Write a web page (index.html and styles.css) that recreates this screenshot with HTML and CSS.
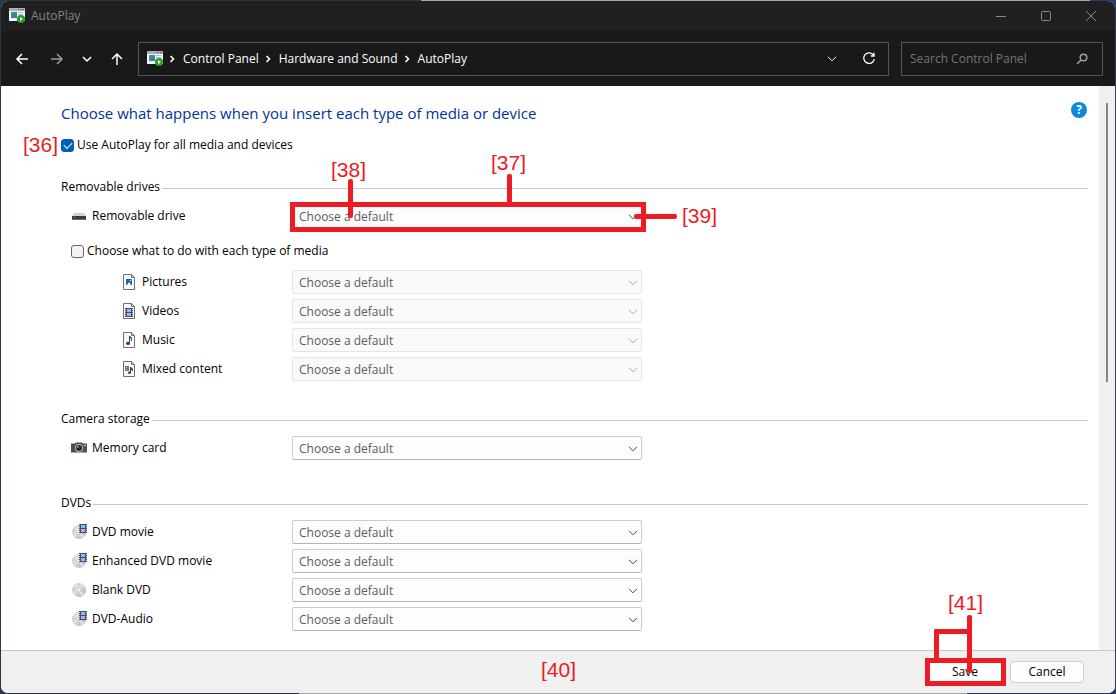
FILE: index.html
```html
<!DOCTYPE html>
<html lang="en">
<head>
<meta charset="utf-8">
<meta name="viewport" content="width=device-width, initial-scale=1">
<title>AutoPlay</title>
<link rel="stylesheet" href="styles.css">
</head>
<body>
<svg class="defs" aria-hidden="true">
  <defs>
    <linearGradient id="screen" x1="0" y1="0" x2="1" y2="1"><stop offset="0" stop-color="#4a9a8a"/><stop offset="1" stop-color="#3d6fb0"/></linearGradient>
    <linearGradient id="disc-fill" x1="0" y1="0" x2="1" y2="1"><stop offset="0" stop-color="#b8baba"/><stop offset=".45" stop-color="#dfe1e1"/><stop offset="1" stop-color="#9da0a0"/></linearGradient>
    <symbol id="autoplay" viewBox="0 0 16 16">
      <path fill="#f4f6f8" d="M0 0h16v13H0z"/><path fill="#a9b0b8" d="M0 0h16v3H0z"/>
      <path fill="#5d6670" d="M9 1h1v1H9zM11 1h1v1h-1zM13 1h2v1h-2z"/>
      <path fill="url(#screen)" d="M2 4h6v6H2z"/><path fill="#9cc3e8" d="M9 4h5v1H9zM9 6h5v1H9z"/>
      <circle cx="12" cy="11" r="4" fill="#22a122"/><path fill="#fff" d="M11 9l3 2-3 2z"/>
    </symbol>
    <symbol id="chevron" viewBox="0 0 10 6"><path d="M1 .8l4 4 4-4" fill="none" stroke="currentColor"/></symbol>
    <symbol id="sep" viewBox="0 0 6 8"><path d="M1.500 1l3 3-3 3" fill="none" stroke="currentColor" stroke-width="1.6"/></symbol>
    <symbol id="page" viewBox="0 0 12 16"><path d="M.5.5h8l3 3v12H.5z" fill="#fafafa" stroke="#707070"/><path d="M8.500 .5v3h3" fill="none" stroke="#707070"/></symbol>
    <symbol id="film" viewBox="0 0 8 9"><g shape-rendering="crispEdges"><path fill="#4c4a60" d="M0 0h8v9H0z"/><path fill="#6ccaf8" d="M2 1h4v3H2z"/><path fill="#bca4f6" d="M2 5h4v3H2z"/><path fill="#d4d4de" d="M0 1h1v1H0zM0 3h1v1H0zM0 5h1v1H0zM0 7h1v1H0zM7 1h1v1H7zM7 3h1v1H7zM7 5h1v1H7zM7 7h1v1H7z"/></g></symbol>
    <symbol id="disc" viewBox="0 0 16 16"><circle cx="8" cy="8" r="7" fill="url(#disc-fill)"/><path d="M8 8L2 4.500A7 7 0 0 1 6 1.300zM8 8l6 3.500A7 7 0 0 1 10 14.700z" fill="#f3f4f4" opacity=".55"/><circle cx="8" cy="8" r="2" fill="#f4f4f4" stroke="#b8baba" stroke-width=".6"/></symbol>
    <symbol id="dvd" viewBox="0 0 16 16"><use href="#disc" width="16" height="16"/><use href="#film" x="8" y="0" width="8" height="9"/></symbol>
  </defs>
</svg>
<div class="window">
  <header class="titlebar">
    <svg class="icon"><use href="#autoplay"/></svg>
    <span class="title">AutoPlay</span>
    <div class="controls">
      <button aria-label="Minimize"><svg class="ctl" viewBox="0 0 12 12"><path d="M1 6.500h10"/></svg></button>
      <button aria-label="Maximize"><svg class="ctl" viewBox="0 0 12 12"><rect x="1.500" y="1.500" width="9" height="9" rx="1"/></svg></button>
      <button aria-label="Close"><svg class="ctl" viewBox="0 0 12 12"><path d="M1 1l10 10M11 1L1 11"/></svg></button>
    </div>
  </header>
  <nav class="toolbar" aria-label="Navigation">
    <div class="history">
      <button aria-label="Back"><svg viewBox="0 0 14 14"><path d="M13 7H2M7 2L2 7l5 5"/></svg></button>
      <button class="forward" aria-label="Forward"><svg viewBox="0 0 14 14"><path d="M1 7h11M7 2l5 5-5 5"/></svg></button>
      <button aria-label="Recent locations"><svg viewBox="0 0 14 14"><path d="M3 5l4 4 4-4"/></svg></button>
      <button aria-label="Up"><svg viewBox="0 0 14 14"><path d="M7 13V2M2 7l5-5 5 5"/></svg></button>
    </div>
    <div class="address">
      <svg class="icon"><use href="#autoplay"/></svg>
      <svg class="sep"><use href="#sep"/></svg><a href="#">Control Panel</a>
      <svg class="sep"><use href="#sep"/></svg><a href="#">Hardware and Sound</a>
      <svg class="sep"><use href="#sep"/></svg><a href="#">AutoPlay</a>
      <button class="push" aria-label="Previous locations"><svg class="drop"><use href="#chevron"/></svg></button>
      <button aria-label="Refresh"><svg class="refresh" viewBox="0 0 14 14"><path d="M11.500 3.200A5.300 5.300 0 1 0 12.300 7M12 .8v3.200H8.800"/></svg></button>
    </div>
    <div class="search">
      <input type="text" placeholder="Search Control Panel" aria-label="Search Control Panel">
      <svg class="glass" viewBox="0 0 12 12"><circle cx="7.500" cy="4.500" r="3.300"/><path d="M5 7L1 11"/></svg>
    </div>
  </nav>
  <div class="view">
    <main class="content">
      <div class="heading">
        <h1>Choose what happens when you insert each type of media or device</h1>
        <a class="help" href="#" aria-label="Help">?</a>
      </div>
      <label class="check all"><input type="checkbox" checked><span>Use AutoPlay for all media and devices</span><b class="note n36">[36]</b></label>

      <section>
        <h2>Removable drives</h2>
        <div class="row">
          <label for="drive"><svg class="icon" viewBox="0 0 16 16"><path fill="#d0d2d4" d="M3 5h10l2 3H1z"/><path fill="#3a3e42" d="M1 8h14v4H1z"/><path fill="#6b7074" d="M1 11h14v1H1z"/><path fill="#54d454" d="M3 9h1v1H3z"/></svg>Removable drive</label>
          <div class="field">
            <select id="drive"><option>Choose a default</option></select><svg><use href="#chevron"/></svg>
            <i class="frame"></i><i class="line l37"></i><i class="line l38"></i><i class="line l39"></i>
            <b class="note n37">[37]</b><b class="note n38">[38]</b><b class="note n39">[39]</b>
          </div>
        </div>
        <label class="check each"><input type="checkbox"><span>Choose what to do with each type of media</span></label>
        <div class="rows media">
          <div class="row"><label for="pictures"><svg class="icon" viewBox="0 0 16 16"><use href="#page" x="2" width="12" height="16"/><path fill="#0f6cbd" d="M5 5h6v6H5z"/><path fill="#fff" d="M6 11l2-3 2 3zM9 6h1v1H9z"/></svg>Pictures</label><div class="field"><select id="pictures" disabled><option>Choose a default</option></select><svg><use href="#chevron"/></svg></div></div>
          <div class="row"><label for="videos"><svg class="icon" viewBox="0 0 16 16"><use href="#page" x="2" width="12" height="16"/><use href="#film" x="4" y="5" width="8" height="9"/></svg>Videos</label><div class="field"><select id="videos" disabled><option>Choose a default</option></select><svg><use href="#chevron"/></svg></div></div>
          <div class="row"><label for="music"><svg class="icon" viewBox="0 0 16 16"><use href="#page" x="2" width="12" height="16"/><path fill="#3d464d" d="M8 4h1l2 2v3h-1V7L9 6v5.500a2 1.600 0 1 1-1-1.500z"/></svg>Music</label><div class="field"><select id="music" disabled><option>Choose a default</option></select><svg><use href="#chevron"/></svg></div></div>
          <div class="row"><label for="mixed"><svg class="icon" viewBox="0 0 16 16"><use href="#page" x="2" width="12" height="16"/><path fill="#6b757c" d="M4 5h4v5H4z"/><path fill="#c3cacf" d="M5 6h1v1H5zM5 8h1v1H5z"/><path fill="#3d464d" d="M9 6h1l2 2v2l-2-1v3a1.500 1.300 0 1 1-1-1.500z"/></svg>Mixed content</label><div class="field"><select id="mixed" disabled><option>Choose a default</option></select><svg><use href="#chevron"/></svg></div></div>
        </div>
      </section>

      <section class="camera">
        <h2>Camera storage</h2>
        <div class="row"><label for="card"><svg class="icon" viewBox="0 0 16 16"><path fill="#4b5054" d="M0 4h4l1-2h6l1 2h4v9H0z"/><path fill="#a4a9ad" d="M0 3h4v1H0zM12 3h4v1h-4zM5 2h6v1H5zM0 12h16v1H0z"/><circle cx="8" cy="8" r="4" fill="#b8bcc0"/><circle cx="8" cy="8" r="3" fill="#24282c"/><circle cx="7" cy="7" r="1" fill="#8899a8"/><path fill="#e0e0e0" d="M13 5h2v1h-2z"/></svg>Memory card</label><div class="field"><select id="card"><option>Choose a default</option></select><svg><use href="#chevron"/></svg></div></div>
      </section>

      <section class="dvds">
        <h2>DVDs</h2>
        <div class="rows">
          <div class="row"><label for="dvd-movie"><svg class="icon"><use href="#dvd"/></svg>DVD movie</label><div class="field"><select id="dvd-movie"><option>Choose a default</option></select><svg><use href="#chevron"/></svg></div></div>
          <div class="row"><label for="enhanced"><svg class="icon"><use href="#dvd"/></svg>Enhanced DVD movie</label><div class="field"><select id="enhanced"><option>Choose a default</option></select><svg><use href="#chevron"/></svg></div></div>
          <div class="row"><label for="blank"><svg class="icon"><use href="#disc"/></svg>Blank DVD</label><div class="field"><select id="blank"><option>Choose a default</option></select><svg><use href="#chevron"/></svg></div></div>
          <div class="row"><label for="audio"><svg class="icon"><use href="#dvd"/></svg>DVD-Audio</label><div class="field"><select id="audio"><option>Choose a default</option></select><svg><use href="#chevron"/></svg></div></div>
        </div>
      </section>
    </main>
    <div class="scrollbar"><div class="thumb"></div></div>
  </div>
  <footer class="footer">
    <b class="center-note">[40]</b>
    <div class="save">
      <button>Save</button>
      <i class="frame"></i><i class="line l41"></i><i class="line l41-top"></i><i class="line l41-side"></i>
      <b class="note n41">[41]</b>
    </div>
    <button>Cancel</button>
  </footer>
</div>
</body>
</html>
```
FILE: styles.css
```css
* { box-sizing: border-box; }
body {
  margin: 0;
  font: 12px/16px "Open Sans", "Noto Sans", sans-serif;
  color: #000;
  background: linear-gradient(100deg, #2b3544 0 34%, #a5a8a8 34% 88%, #2c3a68 88%);
}
button { font: inherit; color: inherit; background: none; border: 0; padding: 0; }
a { color: inherit; text-decoration: none; }
svg { display: block; flex: none; }
.defs { position: absolute; width: 0; height: 0; }
.icon { width: 16px; height: 16px; }

.window {
  height: 100vh;
  display: flex;
  flex-direction: column;
  border: 1px solid transparent;
  border-radius: 8px;
  background: #f0f0f0 padding-box;
  overflow: hidden;
}
.titlebar {
  display: flex;
  align-items: center;
  gap: 6px;
  height: 30px;
  padding: 0 2px 0 8px;
  background: #202020;
  color: #858585;
}
.controls { display: flex; margin-left: auto; }
.controls button { width: 45px; height: 30px; display: grid; place-items: center; }
.ctl { width: 12px; height: 12px; fill: none; stroke: #8a8a8a; }

.toolbar {
  display: flex;
  align-items: center;
  gap: 12px;
  height: 55px;
  padding: 0 12px 0 14px;
  background: #191919;
  color: #fff;
}
.history { display: flex; gap: 16px; width: 111px; }
.history svg { width: 14px; height: 14px; fill: none; stroke: #fff; stroke-width: 1.5; }
.history .forward { margin-left: 5px; }
.history .forward svg { stroke: #999; }
.address, .search {
  display: flex;
  align-items: center;
  height: 34px;
  border: 1px solid #535353;
}
.address { flex: 1; padding: 0 12px 0 8px; }
.address .sep { width: 6px; height: 8px; margin: 0 8px 0 6px; }
.push { margin-left: auto; }
.address button + button { margin-left: 25px; }
.drop { width: 10px; height: 6px; }
.refresh { width: 14px; height: 14px; fill: none; stroke: #fff; stroke-width: 1.3; }
.search { width: 202px; padding: 0 14px 0 8px; }
.search input { flex: 1; min-width: 0; padding: 0; border: 0; background: none; font: inherit; color: #fff; }
.search input::placeholder { color: #757575; opacity: 1; }
.glass { width: 12px; height: 12px; fill: none; stroke: #a0a0a0; stroke-width: 1.5; }

.view { flex: 1; min-height: 0; display: flex; background: #fff; }
.content { flex: 1; min-width: 0; padding: 15px 11px 0 60px; }
.scrollbar { width: 16px; padding: 17px 7px; background: #f0f0f0; }
.thumb { height: 279px; width: 2px; background: #868686; }

.heading { display: flex; justify-content: space-between; align-items: flex-start; height: 24px; }
h1 { margin: 0; font-size: 15px; line-height: 24px; font-weight: 400; color: #003399; }
.help {
  width: 16px; height: 16px; margin: 1px; border-radius: 50%;
  background: #0f86dc; color: #fff; font-weight: 700; text-align: center;
}
.check { display: flex; align-items: center; gap: 3px; width: max-content; height: 16px; }
.check input {
  appearance: none; width: 13px; height: 13px; margin: 0;
  border: 1px solid #666; border-radius: 3px; background: #f3f3f3;
}
.check input:checked { border-color: #005fb8; background: #005fb8; display: grid; place-items: center; }
.check input:checked::after {
  content: ""; width: 7px; height: 4px; margin-bottom: 2px;
  border: solid #fff; border-width: 0 0 1px 1px; transform: rotate(-45deg);
}
.all { position: relative; margin-top: 12px; }
.each { margin: 15px 0 11px 10px; }
section { margin-top: 26px; }
.camera { margin-top: 30px; }
.dvds { margin-top: 35px; }
h2 { display: flex; align-items: center; gap: 2px; margin: 0 0 9px; font-size: 12px; line-height: 16px; font-weight: 400; }
h2::after { content: ""; flex: 1; height: 1px; margin-top: 2px; background: #c8c8c8; }

.rows { display: grid; gap: 5px; }
.row { display: grid; grid-template-columns: 231px 350px; align-items: center; }
.row label { display: flex; align-items: center; gap: 5px; padding-left: 10px; }
.media label { padding-left: 60px; }
.field { position: relative; display: grid; align-items: center; }
.field > * { grid-area: 1 / 1; }
.field > svg { width: 10px; height: 6px; justify-self: end; margin: 2px 4px 0 0; color: #444; pointer-events: none; }
select {
  appearance: none; width: 100%; height: 24px; padding: 1px 24px 0 6px;
  font: inherit; color: #5c5c5c; opacity: 1;
  border: 1px solid #ccc; border-bottom-color: #b4b4b4; border-radius: 2px; background: #fdfdfd;
}
select:disabled { color: #5c5c5c; opacity: 1; border-color: #e5e5e5; background: #fafafa; }
select:disabled + svg { color: #a6a6a6; }

.footer {
  display: flex; justify-content: flex-end; align-items: center; gap: 8px;
  height: 43px; padding-right: 31px;
  border-top: 1px solid #c8c8c8; background: #f0f0f0;
}
.footer button {
  width: 74px; height: 22px;
  border: 1px solid #d0d0d0; border-radius: 4px; background: #fdfdfd;
}
.save { position: relative; }

/* Numbered callouts */
.note, .center-note { font: 21px/24px "Liberation Sans", Arial, sans-serif; color: #ed1c24; }
.note, .frame, .line { position: absolute; pointer-events: none; }
.center-note { margin: 0 auto 4px; padding-left: 196px; }
.frame { inset: -2px -4px -4px -2px; border: 5px solid #ed1c24; }
.save .frame { inset: -3px -4px -3px -3px; }
.line { width: 5px; border-radius: 2px; background: #ed1c24; }
.n36 { left: -38px; }
.n37 { left: 199px; top: -53px; }
.n38 { left: 39px; top: -46px; }
.n39 { left: 390px; top: 0; }
.n41 { left: 20px; top: -70px; }
.l37 { left: 215px; top: -30px; height: 30px; }
.l38 { left: 56px; top: -25px; height: 39px; }
.l39 { left: 342px; top: 10px; width: 43px; height: 5px; }
.l41 { left: 39px; top: -46px; height: 58px; }
.l41-top { left: 6px; top: -32px; width: 38px; height: 5px; }
.l41-side { left: 6px; top: -32px; height: 32px; }
```
